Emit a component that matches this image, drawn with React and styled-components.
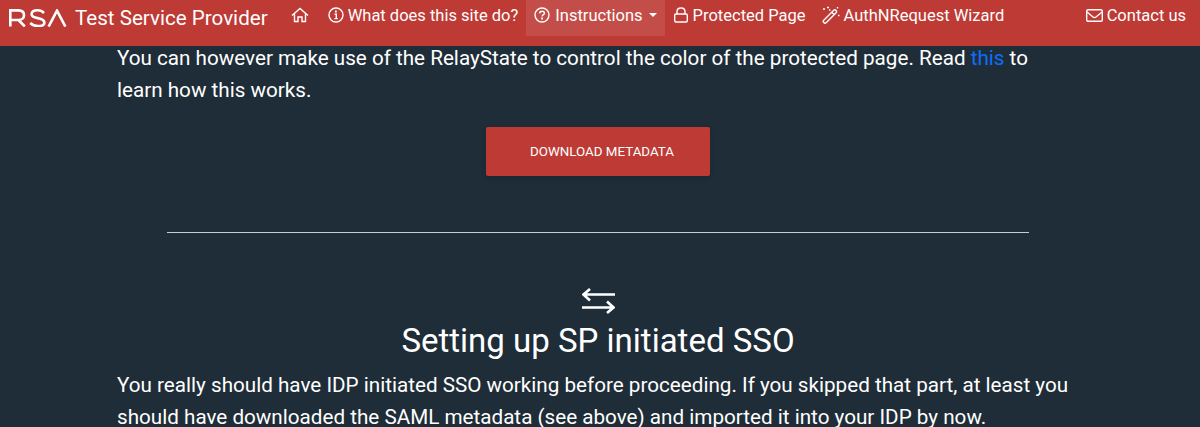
import styled, { createGlobalStyle } from 'styled-components';

const GlobalStyle = createGlobalStyle`
    html, body {
        margin: 0;
        height: 100%;
        overflow: hidden;
        background-color: #1f2d38;
    }
    * {
        box-sizing: border-box;
    }
`;

export default function App() {
    return (
        <>
            <GlobalStyle />
            <Navbar>
                <Brand>
                    <Logo viewBox="0 0 58 18">
                        <path d="M1.3 17.5V1.4H9.5C13 1.4 15 3.4 15 6.2C15 9 13 11 9.5 11H1.3M9.5 11L15.8 17.5" />
                        <path d="M35 4C33.4 2.3 31.2 1.3 28.6 1.3C25 1.3 22.6 2.8 22.6 5.2C22.6 7.6 25 8.4 28.6 9.1C32.6 9.9 35.4 11 35.4 13.4C35.4 15.9 32.6 17 29 17C25.8 17 23.2 16 21.2 14" />
                        <path d="M39.6 17.6L48 1.6L56.4 17.6" />
                    </Logo>
                    <BrandName>Test Service Provider</BrandName>
                </Brand>
                <NavList>
                    <NavItem>
                        <NavIcon width="18" viewBox="0 0 18 16" $space={3}>
                            <path d="M1 8.5L9 1.5L17 8.5M3.5 6.5V14.5H7V10H11V14.5H14.5V6.5" />
                        </NavIcon>
                    </NavItem>
                    <NavItem>
                        <NavIcon width="16" viewBox="0 0 16 16">
                            <circle cx="8" cy="8" r="7" />
                            <path d="M6.5 7.2H8.3V11.4M6.4 11.6H9.8" />
                            <path d="M7 4.6H8.8" strokeWidth="2" />
                        </NavIcon>
                        What does this site do?
                    </NavItem>
                    <NavItem $active>
                        <NavIcon width="16" viewBox="0 0 16 16" $space={1}>
                            <circle cx="8" cy="8" r="7" />
                            <path d="M5.6 6.4C5.7 5 6.7 4.2 8 4.2C9.4 4.2 10.4 5 10.4 6.2C10.4 7.6 8.1 7.8 8.1 9.6" />
                            <path d="M7.2 11.6H9" strokeWidth="2" />
                        </NavIcon>
                        Instructions
                        <Caret />
                    </NavItem>
                    <NavItem>
                        <NavIcon width="16" viewBox="0 0 16 16">
                            <path d="M4 7V4.6C4 2.4 5.8 1 8 1C10.2 1 12 2.4 12 4.6V7" />
                            <rect x="1.7" y="7" width="12.6" height="8" rx="1.2" />
                        </NavIcon>
                        Protected Page
                    </NavItem>
                    <NavItem>
                        <NavIcon width="18" viewBox="0 0 18 18">
                            <path d="M1.5 14.5L11.5 4.5C12.3 3.7 13.3 3.7 14 4.4C14.7 5.1 14.7 6.1 13.9 6.9L3.9 16.9C3.2 17.4 2.4 17.2 1.8 16.6C1.2 16 1 15.2 1.5 14.5Z" />
                            <path d="M9.8 6.2L12.2 8.6" />
                            <path d="M1 3H3M5 1.5H7M7 4H8.5M15.5 1V2.5M16 9.5H17.5" />
                        </NavIcon>
                        AuthNRequest Wizard
                    </NavItem>
                </NavList>
                <NavItem>
                    <NavIcon width="17" viewBox="0 0 17 13">
                        <rect x="0.7" y="0.7" width="15.6" height="11.6" rx="1.4" />
                        <path d="M1 3L7 8C7.9 8.7 9.1 8.7 10 8L16 3" />
                    </NavIcon>
                    Contact us
                </NavItem>
            </Navbar>
            <Content>
                <Paragraph>
                    You can however make use of the RelayState to control the
                    color of the protected page. Read <Link href="#">this</Link>{' '}
                    to learn how this works.
                </Paragraph>
                <DownloadButton>Download metadata</DownloadButton>
                <Divider />
                <SectionIcon viewBox="0 0 33 26">
                    <path d="M1.5 6.5H33M8 1L1.5 6.5L8 12.5" />
                    <path d="M0 19.5H31.5M25 13.5L31.5 19.5L25 25" />
                </SectionIcon>
                <Heading>Setting up SP initiated SSO</Heading>
                <Paragraph>
                    You really should have IDP initiated SSO working before
                    proceeding. If you skipped that part, at least you should
                    have downloaded the SAML metadata (see above) and imported
                    it into your IDP by now.
                </Paragraph>
            </Content>
        </>
    );
}

const Navbar = styled.nav`
    position: relative;
    z-index: 1;
    display: flex;
    align-items: flex-start;
    justify-content: space-between;
    height: 46px;
    padding-left: 9px;
    padding-right: 6px;
    background-color: #bd3a35;
    color: #fff;
    font-family: Roboto, sans-serif;
`;

const Brand = styled.div`
    display: flex;
    align-items: center;
    height: 35px;
    margin-right: 15px;
`;

const Logo = styled.svg`
    width: 58px;
    height: 18px;
    margin-right: 8px;
    fill: none;
    stroke: #fff;
    stroke-width: 2.6;
`;

const BrandName = styled.span`
    font-size: 20.6px;
    white-space: nowrap;
`;

const NavList = styled.div`
    display: flex;
    flex: 1;
`;

const NavItem = styled.div`
    display: flex;
    align-items: center;
    gap: 4px;
    height: 36px;
    padding: 0 8px 6px;
    font-size: 16.5px;
    white-space: nowrap;
    background-color: ${(props) =>
        props.$active ? 'rgba(255, 255, 255, 0.1)' : 'transparent'};
`;

const NavIcon = styled.svg`
    flex-shrink: 0;
    margin-right: ${(props) => props.$space || 0}px;
    fill: none;
    stroke: #fff;
    stroke-width: 1.4;
`;

const Caret = styled.span`
    width: 0;
    height: 0;
    margin-left: 2px;
    border-top: 4.5px solid #fff;
    border-left: 4.5px solid transparent;
    border-right: 4.5px solid transparent;
`;

const Content = styled.main`
    display: flex;
    flex-direction: column;
    align-items: center;
    width: 962px;
    margin-top: -4px;
    margin-left: 117px;
    color: #fff;
    font-family: Roboto, sans-serif;
`;

const Paragraph = styled.p`
    align-self: stretch;
    margin: 0;
    padding-right: 6px;
    font-size: 20.66px;
    line-height: 32px;
`;

const Link = styled.a`
    color: #0d6efd;
    text-decoration: none;
`;

const DownloadButton = styled.button`
    width: 224px;
    height: 49px;
    margin-top: 21px;
    padding: 0 0 0 8px;
    border: 0;
    border-radius: 2px;
    background-color: #bd3a35;
    color: #fff;
    font-family: Roboto, sans-serif;
    font-size: 13.35px;
    text-transform: uppercase;
    box-shadow: 0 2px 5px rgba(0, 0, 0, 0.16);
`;

const Divider = styled.hr`
    width: 862px;
    margin: 56px 0 0;
    border: 0;
    border-top: 1px solid #c8ccd0;
`;

const SectionIcon = styled.svg`
    flex-shrink: 0;
    width: 33px;
    height: 26px;
    margin-top: 55px;
    fill: none;
    stroke: #fff;
    stroke-width: 2.6;
`;

const Heading = styled.h2`
    margin: 8px 0 9px;
    font-size: 33px;
    font-weight: 400;
    line-height: 38px;
`;
